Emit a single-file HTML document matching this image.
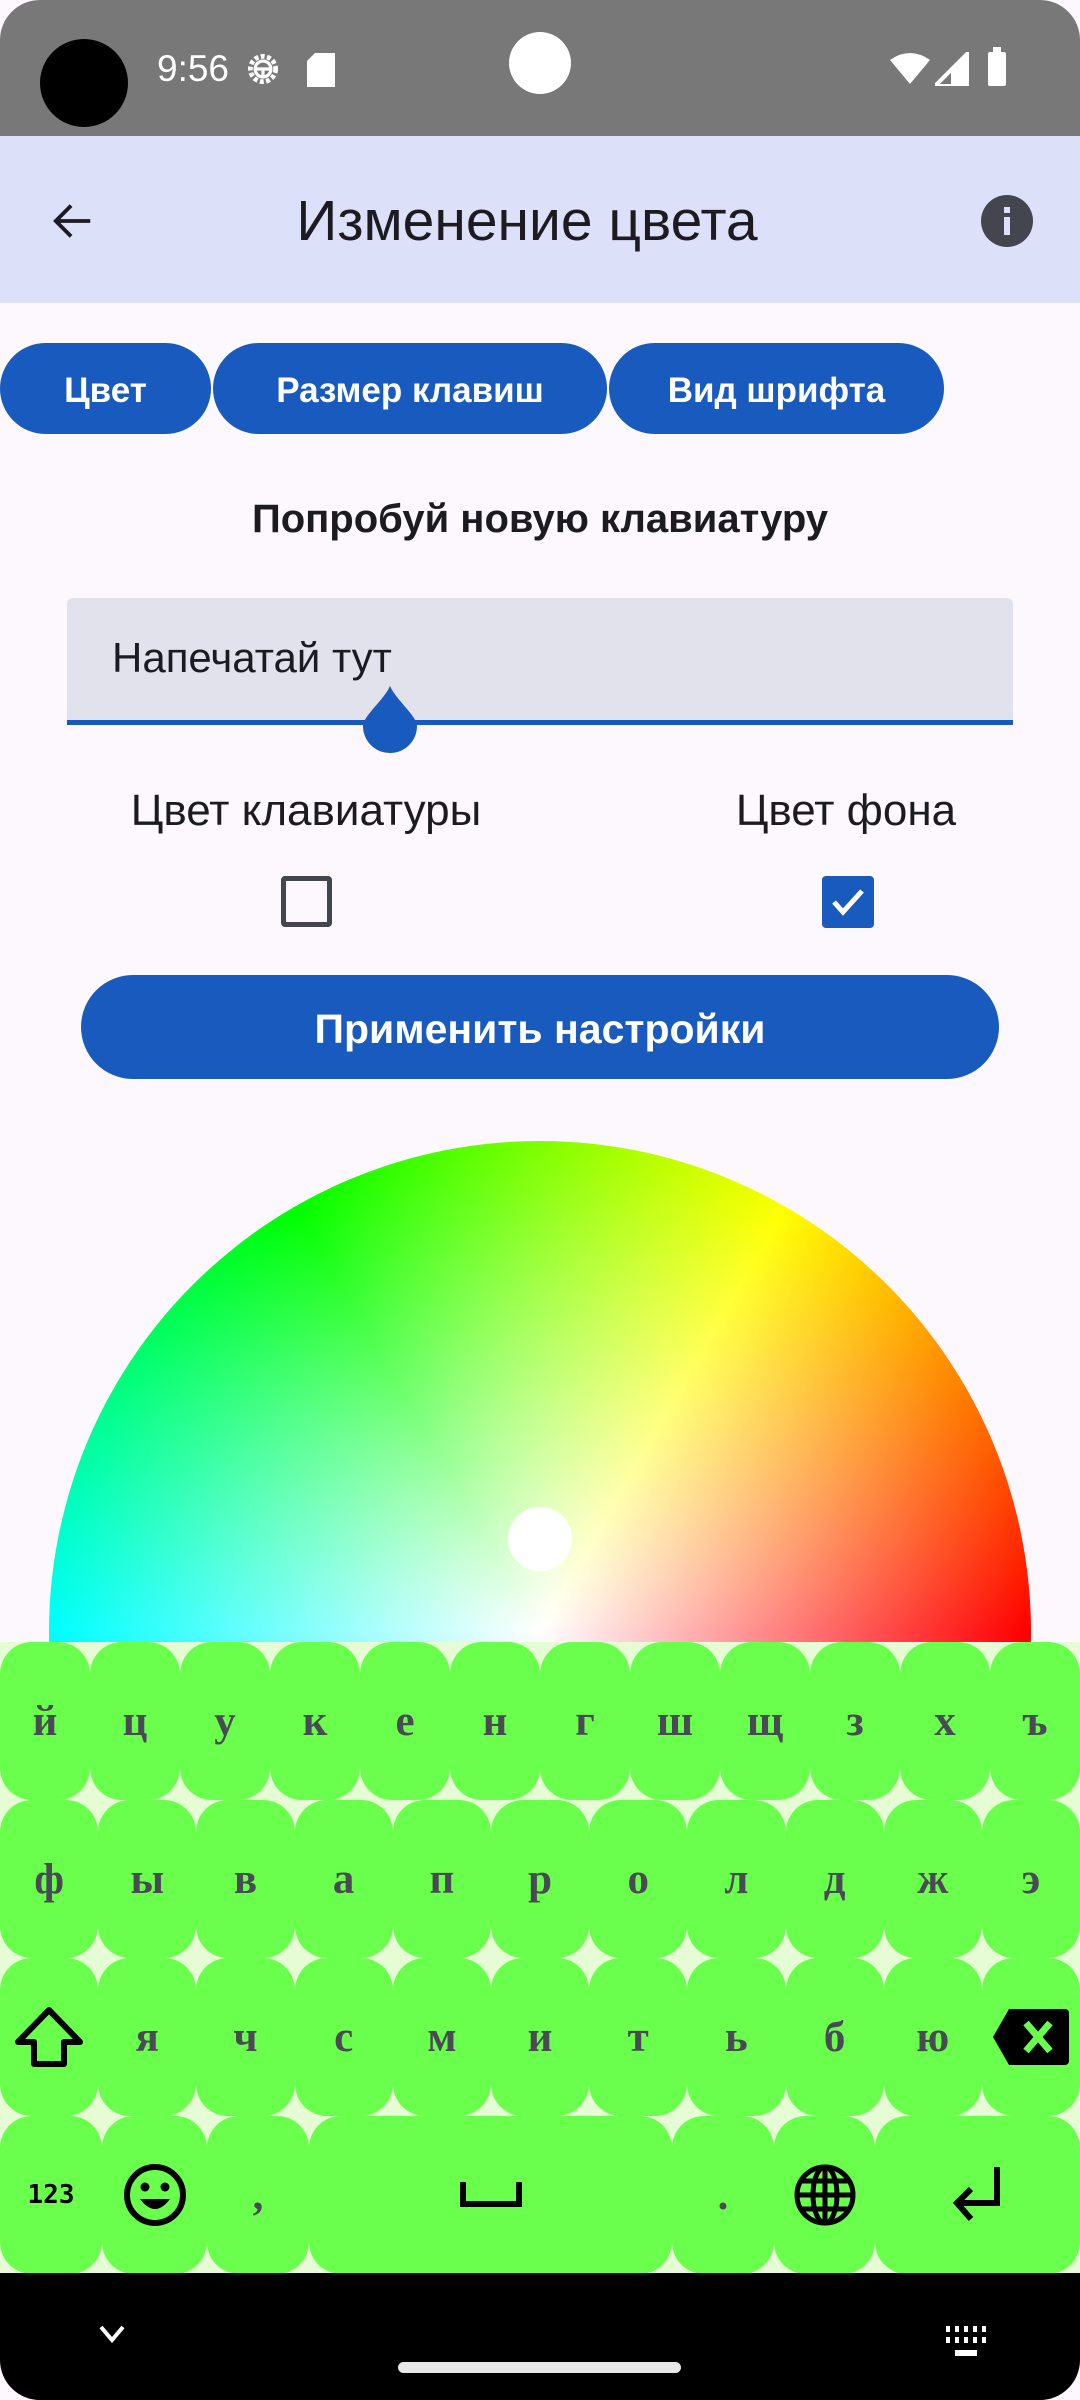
<!DOCTYPE html>
<html><head><meta charset="utf-8"><style>
*{margin:0;padding:0;box-sizing:border-box}
body{width:1080px;height:2400px;position:relative;overflow:hidden;background:#fcf8fd;font-family:"Liberation Sans","DejaVu Sans",sans-serif}
.a{position:absolute}
.tab{position:absolute;top:343px;height:91px;background:#185abd;color:#fff;border-radius:46px;font-size:35px;font-weight:bold;display:flex;align-items:center;justify-content:center;padding-top:4px}
.kb{position:absolute;left:0;top:1642px;width:1080px;height:631px;background:#e6fcd4}
.row{position:absolute;left:0;width:1080px;height:158px;display:flex}
.k{height:158px;background:#6aff4d;border-radius:32px;display:flex;align-items:center;justify-content:center;font-family:"Liberation Serif",serif;font-weight:bold;font-size:43px;color:#4a4a55;flex:none}
</style></head><body>
<!-- status bar -->
<div class="a" style="left:0;top:0;width:1080px;height:136px;background:#787878;border-radius:40px 40px 0 0"></div>
<div class="a" style="left:40px;top:39px;width:88px;height:88px;border-radius:50%;background:#000"></div>
<div class="a" style="left:509px;top:32px;width:62px;height:62px;border-radius:50%;background:#fff"></div>
<div class="a" style="left:157px;top:48px;color:#fff;font-size:37px">9:56</div>
<svg class="a" style="left:244px;top:50px" width="38" height="38" viewBox="0 0 24 24"><circle cx="12" cy="12" r="8" fill="none" stroke="#fff" stroke-width="3" stroke-dasharray="2.5 1.5"/><circle cx="12" cy="12" r="5" fill="none" stroke="#fff" stroke-width="2"/><path d="M7 12h10M12 12v6" stroke="#fff" stroke-width="2"/></svg>
<svg class="a" style="left:307px;top:53px" width="28" height="34" viewBox="0 0 14 17"><path d="M4 0h10v17H0V4z" fill="#fff"/></svg>
<svg class="a" style="left:890px;top:52px" width="40" height="32" viewBox="0 0 20 16"><path d="M0 4Q10-3 20 4L10 16z" fill="#fff"/></svg>
<svg class="a" style="left:935px;top:52px" width="34" height="34" viewBox="0 0 17 17"><path d="M17 0V17H0z" fill="none" stroke="#fff" stroke-width="2"/><path d="M17 0V17H8V9z" fill="#fff"/></svg>
<div class="a" style="left:988px;top:52px;width:18px;height:34px;background:#fff;border-radius:2px"></div>
<div class="a" style="left:993px;top:47px;width:8px;height:6px;background:#fff"></div>
<!-- app bar -->
<div class="a" style="left:0;top:136px;width:1080px;height:167px;background:#dce1f9"></div>
<svg class="a" style="left:50px;top:198px" width="46" height="46" viewBox="0 0 24 24"><path d="M21 12H4M11 4l-8 8 8 8" fill="none" stroke="#1b1b21" stroke-width="2"/></svg>
<div class="a" style="left:0;top:188px;width:1054px;text-align:center;font-size:57px;color:#1b1b21">Изменение цвета</div>
<div class="a" style="left:981px;top:195px;width:52px;height:52px;border-radius:50%;background:#44464f"></div>
<div class="a" style="left:1004px;top:207px;width:6px;height:6px;background:#dce1f9"></div>
<div class="a" style="left:1004px;top:217px;width:6px;height:18px;background:#dce1f9"></div>
<!-- tabs -->
<div class="tab" style="left:0;width:211px">Цвет</div>
<div class="tab" style="left:213px;width:394px">Размер клавиш</div>
<div class="tab" style="left:609px;width:335px">Вид шрифта</div>
<div class="a" style="left:0;top:497px;width:1080px;text-align:center;font-size:40px;font-weight:bold;color:#1b1b21">Попробуй новую клавиатуру</div>
<!-- text field -->
<div class="a" style="left:67px;top:598px;width:946px;height:127px;background:#e2e2ec;border-radius:6px 6px 0 0;border-bottom:5px solid #185abd"></div>
<div class="a" style="left:112px;top:634px;font-size:42px;color:#1b1b21">Напечатай тут</div>
<svg class="a" style="left:362px;top:686px" width="56" height="68" viewBox="0 0 56 68"><path d="M28 0C34 14 55 30 55 40A27 27 0 0 1 1 40C1 30 22 14 28 0z" fill="#185abd"/></svg>
<!-- labels -->
<div class="a" style="left:86px;top:786px;width:440px;text-align:center;font-size:44px;color:#1b1b21">Цвет клавиатуры</div>
<div class="a" style="left:626px;top:786px;width:440px;text-align:center;font-size:44px;color:#1b1b21">Цвет фона</div>
<div class="a" style="left:281px;top:876px;width:51px;height:51px;border:5px solid #44464f;border-radius:4px"></div>
<div class="a" style="left:822px;top:876px;width:52px;height:52px;background:#185abd;border-radius:4px"></div>
<svg class="a" style="left:822px;top:876px" width="52" height="52" viewBox="0 0 52 52"><path d="M12 26l9 10 19-21" fill="none" stroke="#fff" stroke-width="5"/></svg>
<div class="a" style="left:81px;top:975px;width:918px;height:104px;background:#185abd;border-radius:52px;color:#fff;font-size:41px;font-weight:bold;display:flex;align-items:center;justify-content:center;padding-top:4px">Применить настройки</div>
<!-- color wheel -->
<div class="a" style="left:49px;top:1141px;width:982px;height:982px;border-radius:50%;background:radial-gradient(circle,#fff 0%,rgba(255,255,255,0) 70%),conic-gradient(from 0deg,hsl(90,100%,50%),hsl(60,100%,50%) 30deg,hsl(0,100%,50%) 90deg,hsl(300,100%,50%) 150deg,hsl(240,100%,50%) 210deg,hsl(180,100%,50%) 270deg,hsl(120,100%,50%) 330deg,hsl(90,100%,50%) 360deg)"></div>
<div class="a" style="left:508px;top:1507px;width:64px;height:64px;border-radius:50%;background:#fff"></div>
<!-- keyboard -->
<div class="kb">
<div class="row" style="top:0">
<div class="k" style="width:90px">й</div><div class="k" style="width:90px">ц</div><div class="k" style="width:90px">у</div><div class="k" style="width:90px">к</div><div class="k" style="width:90px">е</div><div class="k" style="width:90px">н</div><div class="k" style="width:90px">г</div><div class="k" style="width:90px">ш</div><div class="k" style="width:90px">щ</div><div class="k" style="width:90px">з</div><div class="k" style="width:90px">х</div><div class="k" style="width:90px">ъ</div>
</div>
<div class="row" style="top:158px">
<div class="k" style="width:98.2px">ф</div><div class="k" style="width:98.2px">ы</div><div class="k" style="width:98.2px">в</div><div class="k" style="width:98.2px">а</div><div class="k" style="width:98.2px">п</div><div class="k" style="width:98.2px">р</div><div class="k" style="width:98.2px">о</div><div class="k" style="width:98.2px">л</div><div class="k" style="width:98.2px">д</div><div class="k" style="width:98.2px">ж</div><div class="k" style="width:98.2px">э</div>
</div>
<div class="row" style="top:316px">
<div class="k" style="width:98.2px"><svg width="70" height="62" viewBox="0 0 70 62"><path d="M35 4L4 36h16v22h30V36h16z" fill="none" stroke="#000" stroke-width="6" stroke-linejoin="round"/></svg></div>
<div class="k" style="width:98.2px">я</div><div class="k" style="width:98.2px">ч</div><div class="k" style="width:98.2px">с</div><div class="k" style="width:98.2px">м</div><div class="k" style="width:98.2px">и</div><div class="k" style="width:98.2px">т</div><div class="k" style="width:98.2px">ь</div><div class="k" style="width:98.2px">б</div><div class="k" style="width:98.2px">ю</div>
<div class="k" style="width:98.2px"><svg width="76" height="56" viewBox="0 0 76 56"><path d="M16 0H72a4 4 0 0 1 4 4V52a4 4 0 0 1-4 4H16L0 28z" fill="#000"/><path d="M33 14l24 28M57 14L33 42" stroke="#6aff4d" stroke-width="7"/></svg></div>
</div>
<div class="row" style="top:474px">
<div class="k" style="width:102px;font-family:'DejaVu Sans Mono',monospace;font-size:26px;color:#000">123</div>
<div class="k" style="width:105px"><svg width="64" height="64" viewBox="0 0 64 64"><circle cx="32" cy="32" r="28" fill="none" stroke="#000" stroke-width="6"/><circle cx="22" cy="24" r="4.5"/><circle cx="42" cy="24" r="4.5"/><path d="M17 36Q32 56 47 36z"/></svg></div>
<div class="k" style="width:102px">,</div>
<div class="k" style="width:363px"><svg width="62" height="26" viewBox="0 0 62 26"><path d="M3 0V22H59V0" fill="none" stroke="#000" stroke-width="6"/></svg></div>
<div class="k" style="width:102px">.</div>
<div class="k" style="width:101px"><svg width="64" height="64" viewBox="0 0 64 64" fill="none" stroke="#000" stroke-width="5"><circle cx="32" cy="32" r="28"/><ellipse cx="32" cy="32" rx="12" ry="28"/><path d="M32 4V60M4 32H60M9 18H55M9 46H55"/></svg></div>
<div class="k" style="width:205px"><svg width="50" height="56" viewBox="0 0 50 56" fill="none" stroke="#000" stroke-width="6"><path d="M44 0V36H6M18 22L4 36l14 16"/></svg></div>
</div>
</div>
<!-- nav bar -->
<div class="a" style="left:0;top:2273px;width:1080px;height:127px;background:#000;border-radius:0 0 40px 40px"></div>
<svg class="a" style="left:98px;top:2323px" width="28" height="22" viewBox="0 0 28 22"><path d="M3 4l11 13L25 4" fill="none" stroke="#fff" stroke-width="4"/></svg>
<svg class="a" style="left:946px;top:2326px" width="42" height="32" viewBox="0 0 42 32" fill="#fff"><rect x="0" y="0" width="4" height="6"/><rect x="9" y="0" width="4" height="6"/><rect x="18" y="0" width="4" height="6"/><rect x="27" y="0" width="4" height="6"/><rect x="36" y="0" width="4" height="6"/><rect x="0" y="11" width="4" height="6"/><rect x="9" y="11" width="4" height="6"/><rect x="18" y="11" width="4" height="6"/><rect x="27" y="11" width="4" height="6"/><rect x="36" y="11" width="4" height="6"/><rect x="9" y="24" width="22" height="6"/></svg>
<div class="a" style="left:398px;top:2362px;width:283px;height:11px;border-radius:6px;background:#e8e8e8"></div>
</body></html>
